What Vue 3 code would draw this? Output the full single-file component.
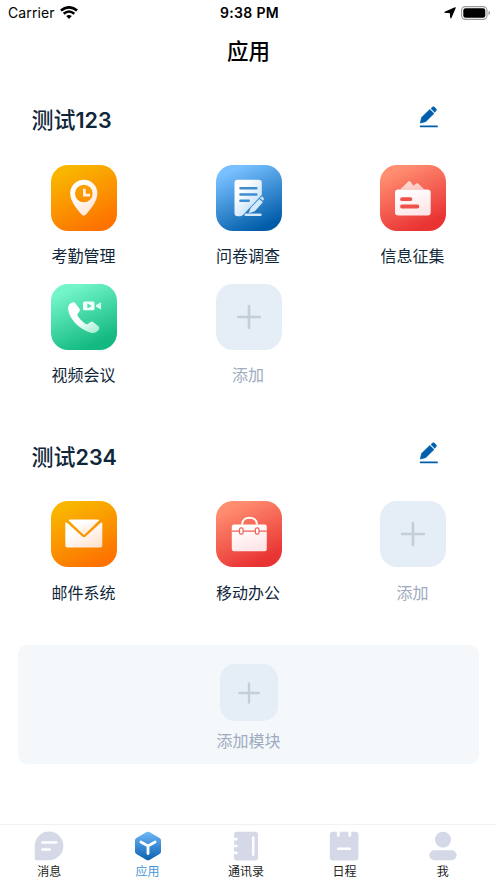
<script setup>
const sections = [
  {
    title: '测试',
    num: '123',
    apps: [
      { name: '考勤管理', icon: 'pin', tone: 'orange' },
      { name: '问卷调查', icon: 'survey', tone: 'blue' },
      { name: '信息征集', icon: 'collect', tone: 'red' },
      { name: '视频会议', icon: 'video', tone: 'green' },
      { name: '添加', icon: 'plus', tone: 'add' },
    ],
  },
  {
    title: '测试',
    num: '234',
    apps: [
      { name: '邮件系统', icon: 'mail', tone: 'orange' },
      { name: '移动办公', icon: 'bag', tone: 'red' },
      { name: '添加', icon: 'plus', tone: 'add' },
    ],
  },
]
const tabs = [
  { name: '消息', icon: 'chat' },
  { name: '应用', icon: 'cube', active: true },
  { name: '通讯录', icon: 'book' },
  { name: '日程', icon: 'calendar' },
  { name: '我', icon: 'user' },
]
</script>

<template>
  <div class="screen">
    <svg class="defs" width="0" height="0" aria-hidden="true">
      <defs>
        <linearGradient id="g-orange" x1="0.2" y1="0.1" x2="0.9" y2="1"><stop offset="0.2" stop-color="#fff" /><stop offset="1" stop-color="#ffe0cc" /></linearGradient>
        <linearGradient id="g-blue" x1="0.1" y1="0.1" x2="0.8" y2="0.9"><stop offset="0.2" stop-color="#fff" /><stop offset="1" stop-color="#bcdcf8" /></linearGradient>
        <linearGradient id="g-red" x1="0.3" y1="0" x2="0.7" y2="1"><stop offset="0" stop-color="#fff" /><stop offset="1" stop-color="#ffe4e6" /></linearGradient>
        <linearGradient id="g-green" x1="0.2" y1="0.1" x2="0.8" y2="1"><stop offset="0.45" stop-color="#fff" /><stop offset="1" stop-color="#a9efd5" /></linearGradient>
        <linearGradient id="g-cube" x1="0" y1="0" x2="0" y2="1"><stop offset="0" stop-color="#70b8fa" /><stop offset="1" stop-color="#0961ae" /></linearGradient>
      </defs>
    </svg>

    <header class="status">
      <div class="status-left">
        <span>Carrier</span>
        <svg width="18" height="13" viewBox="0 0 18 13" fill="none" stroke="#000" stroke-width="2.6">
          <path d="M.9 4.6Q9-2 17.1 4.6M3.7 7.8Q9 3.2 14.3 7.8" />
          <path d="M6.2 10.1Q9 7.7 11.8 10.1L9 13Z" fill="#000" stroke="none" />
        </svg>
      </div>
      <span class="clock">9:38 PM</span>
      <div class="status-right">
        <svg width="12" height="12" viewBox="0 0 12 12"><path d="M11.2.8 6.9 10.9 6.3 5.7.9 5.3Z" fill="#000" stroke="#000" stroke-width="1.1" stroke-linejoin="round" /></svg>
        <svg width="30" height="14" viewBox="0 0 30 14">
          <rect x=".6" y=".6" width="25.4" height="12.8" rx="3.8" fill="none" stroke="#999" stroke-width="1.1" />
          <rect x="2.3" y="2.3" width="22" height="9.4" rx="2.3" />
          <path d="M27.5 4.8q1.6.6 1.6 2.2t-1.6 2.2z" fill="#999" />
        </svg>
      </div>
    </header>

    <h1 class="page-title">应用</h1>

    <section v-for="s in sections" :key="s.num" class="section">
      <div class="section-head">
        <h2>{{ s.title }}<span>{{ s.num }}</span></h2>
        <svg class="edit" width="20" height="22" viewBox="0 0 20 22" fill="#005eac">
          <path d="M1.4 17 2.6 11.6 10.8 3.6 14.9 7.6 6.8 15.5Z" stroke="#005eac" stroke-width=".8" stroke-linejoin="round" />
          <path d="M11.9 2.5 13.4 1.1q1-.9 2 0l1.7 1.7q.9 1 0 2L15.9 6.4Z" stroke="#005eac" stroke-width=".4" />
          <rect x=".8" y="19.4" width="18" height="1.8" rx=".5" />
        </svg>
      </div>
      <div class="grid">
        <div v-for="(a, i) in s.apps" :key="i" class="app" :class="a.tone">
          <div class="tile">
            <svg width="66" height="66" viewBox="0 0 66 66" fill="none" stroke-linecap="round" stroke-linejoin="round">
              <template v-if="a.icon === 'pin'">
                <path fill="url(#g-orange)" fill-rule="evenodd" d="M32.8 14.8A13.6 13.6 0 0 0 19.2 28.5C19.2 36.5 26.4 44.5 30.6 49.6Q32.8 51.8 35 49.6C39.2 44.5 46.4 36.5 46.4 28.5A13.6 13.6 0 0 0 32.8 14.8ZM32.8 19.7A8.8 8.8 0 1 1 32.8 37.3A8.8 8.8 0 1 1 32.8 19.7Z" />
                <path d="M33.4 23.8V30.2H39.2" stroke="#fff0e0" stroke-width="2.8" stroke-linecap="butt" stroke-linejoin="miter" />
              </template>
              <template v-else-if="a.icon === 'survey'">
                <path fill="url(#g-blue)" d="M21.6 14.8H42.7Q45.8 14.8 45.8 17.8V29.8L27.2 49.8Q26 51.2 24.2 51.2H21.6Q18.5 51.2 18.5 48.2V17.8Q18.5 14.8 21.6 14.8Z" />
                <path d="M24.4 23.2H40.4M24.4 29.5H40.4M24.4 35.8H32.8" stroke="#3f8ccf" stroke-width="2.4" />
                <path d="M43.2 34 46.8 37.3 38.8 46.2 32.6 48.3 34.8 42.8Z" fill="#d5e9fb" />
                <path d="M44.4 32.7 45 32.2Q46 31.5 47 32.4Q48.2 33.6 47.4 34.8L46.9 35.3Z" fill="#d5e9fb" stroke="#d5e9fb" stroke-width=".6" />
                <path d="M29.7 49.7H44.4" stroke="#d5e9fb" stroke-width="2.5" />
              </template>
              <template v-else-if="a.icon === 'collect'">
                <path fill="url(#g-red)" fill-opacity=".75" d="M20 24.5 28.4 16.4Q29.3 15.4 30.2 16.4L33.6 20.8 36.3 18.5Q37.2 17.7 38.1 18.6L44.5 24.5Z" />
                <rect x="15" y="24.5" width="35.7" height="26" rx="3.3" fill="url(#g-red)" />
                <path d="M22 34.2H30.4M22 41.5H37.4" stroke="#ef514b" stroke-width="3.8" />
              </template>
              <template v-else-if="a.icon === 'video'">
                <path fill="url(#g-green)" d="M21.4 18.4C18.3 19.5 16.6 22.2 17.1 25.6C18.6 35.8 29.1 46 39.8 48.8C43.5 49.7 47 47.8 48.3 44.8Q48.7 43.3 47.2 42L42.4 38.2Q41.1 37.1 39.6 38.1L36.8 39.9Q35.5 40.6 34 39.6Q29.7 36.6 26.7 32Q25.9 30.6 26.8 29.4L28.4 27.4Q29.3 26.1 28.4 24.6L24.2 19Q23 17.7 21.4 18.4Z" />
                <path fill="#f3fffa" fill-rule="evenodd" d="M33.5 17.5H42Q43.5 17.5 43.5 19V24.7Q43.5 26.2 42 26.2H33.5Q32 26.2 32 24.7V19Q32 17.5 33.5 17.5ZM36.4 19.4V24.5L40.7 22Z" />
                <path fill="#d9fbed" d="M45 21.1 49.4 18.4Q50 18.2 50 18.9V25Q50 25.7 49.4 25.3L45 22.7Z" />
              </template>
              <template v-else-if="a.icon === 'mail'">
                <path fill="url(#g-orange)" d="M18.7 18.5H47.2Q48.7 18.7 47.8 19.8L34.2 33.1Q33 34.2 31.8 33.1L18 19.8Q17.3 18.7 18.7 18.5Z" />
                <path fill="url(#g-orange)" d="M14.3 22.3Q14.7 21 16 21.8L31.3 35.6Q33 37 34.6 35.6L49.7 21.8Q51 21 51.3 22.3V44.4Q51.3 46.5 49.2 46.5H16.4Q14.3 46.5 14.3 44.4Z" />
              </template>
              <template v-else-if="a.icon === 'bag'">
                <path d="M26.1 23.5C26.3 14.5 40.8 14.5 41 23.5" stroke="#fff" stroke-width="2.1" stroke-linecap="butt" />
                <rect x="15.8" y="23.5" width="35" height="26.8" rx="2.2" fill="url(#g-red)" />
                <path d="M15.8 30.1H50.8" stroke="#f26058" stroke-width="1.2" stroke-linecap="butt" />
                <rect x="23.5" y="26.9" width="3.6" height="6.3" rx="1.7" fill="#fff" stroke="#f26058" stroke-width="1.2" />
                <rect x="39.4" y="26.9" width="3.6" height="6.3" rx="1.7" fill="#fff" stroke="#f26058" stroke-width="1.2" />
              </template>
              <path v-else d="M33 22.1V43.9M22.1 33H43.9" stroke="#c3cedb" stroke-width="2.7" />
            </svg>
          </div>
          <span class="name">{{ a.name }}</span>
        </div>
      </div>
    </section>

    <div class="add-module">
      <div class="small-tile">
        <svg width="58" height="58" viewBox="0 0 58 58" fill="none" stroke-linecap="round">
          <path d="M29 19.4V38.6M19.4 29H38.6" stroke="#c3cedb" stroke-width="2.4" />
        </svg>
      </div>
      <span>添加模块</span>
    </div>

    <nav class="tabbar">
      <div v-for="t in tabs" :key="t.name" class="tab" :class="{ active: t.active }">
        <svg width="30" height="30" viewBox="0 0 30 30" fill="#d4d8e7" stroke-linecap="round">
          <template v-if="t.icon === 'chat'">
            <path d="M15 .6A14.3 14.3 0 1 1 15 29.3H2.3Q.8 29.3.8 27.8V14.9A14.3 14.3 0 0 1 15 .6Z" />
            <path d="M8.4 11.6H22.3M8.4 18.6H15.7" stroke="#fff" stroke-width="2.5" />
          </template>
          <template v-else-if="t.icon === 'cube'">
            <path fill="url(#g-cube)" d="M13.6 1Q15 .3 16.4 1L26.6 6.9Q28 7.7 28 9.3V20.6Q28 22.2 26.6 23L16.4 28.9Q15 29.7 13.6 28.9L3.4 23Q2 22.2 2 20.6V9.3Q2 7.7 3.4 6.9Z" />
            <path d="M7.9 11 15 14.9 22.1 11M15 14.9V22.6" fill="none" stroke="#fff" stroke-width="2.8" />
          </template>
          <template v-else-if="t.icon === 'book'">
            <rect x="3" y=".8" width="24" height="28.6" rx="3" />
            <path d="M2.5 8.2H5.4M2.5 15H5.4M2.5 21.8H5.4" stroke="#fff" stroke-width="2.7" />
            <path d="M22.2 6.6V23.7" stroke="#fff" stroke-width="2.5" />
          </template>
          <template v-else-if="t.icon === 'calendar'">
            <rect x=".8" y=".8" width="28.6" height="28.6" rx="3.2" />
            <path d="M9.3 0V4.4M20.8 0V4.4" stroke="#fff" stroke-width="2.8" />
            <path d="M9.2 17.7H20.8" stroke="#fff" stroke-width="2.6" />
          </template>
          <template v-else>
            <circle cx="15" cy="8.7" r="8" />
            <rect x="1.4" y="19.3" width="27.2" height="10" rx="5" />
          </template>
        </svg>
        <span>{{ t.name }}</span>
      </div>
    </nav>
  </div>
</template>

<style>
body {
  background: #fff;
}
</style>

<style scoped>
.screen {
  width: 497px;
  height: 883px;
  overflow: hidden;
  display: flex;
  flex-direction: column;
  font-family: Inter, "Noto Sans CJK SC", sans-serif;
  color: #10273a;
}
.defs {
  display: block;
  flex: none;
}
.status {
  height: 25px;
  flex: none;
  display: grid;
  grid-template-columns: 1fr auto 1fr;
  align-items: center;
  padding: 0 6px 0 8px;
  color: #000;
  font-size: 14px;
  line-height: 25px;
  box-sizing: border-box;
}
.status-left,
.status-right {
  display: flex;
  align-items: center;
  gap: 5px;
}
.status-left {
  letter-spacing: 0.1px;
}
.status-right {
  justify-content: flex-end;
}
.clock {
  font-weight: 600;
  letter-spacing: 0.3px;
}
.page-title {
  margin: 0;
  height: 50.5px;
  line-height: 52px;
  text-align: center;
  font-size: 21.5px;
  font-weight: 500;
  color: #000;
  flex: none;
}
.section {
  height: 217px;
  flex: none;
}
.section:nth-of-type(1) {
  height: 336.5px;
}
.section-head {
  height: 89px;
  display: flex;
  justify-content: space-between;
  align-items: center;
  padding: 0 58px 0 31.5px;
}
.section-head h2 {
  margin: 0;
  font-size: 22px;
  line-height: 30px;
  font-weight: 500;
}
.section-head h2 span {
  font-weight: 600;
  font-size: 21.5px;
}
.edit {
  margin-bottom: 7px;
}
.grid {
  display: grid;
  grid-template-columns: repeat(3, 164.5px);
  grid-auto-rows: 119px;
  justify-content: center;
}
.app {
  display: flex;
  flex-direction: column;
  align-items: center;
}
.tile {
  width: 66px;
  height: 66px;
  border-radius: 17px;
}
.tile svg {
  display: block;
}
.orange .tile {
  background: linear-gradient(155deg, #f9b600 12%, #fd7200 88%);
}
.blue .tile {
  background: linear-gradient(155deg, #77bfff 14%, #005ca8 88%);
}
.red .tile {
  background: linear-gradient(155deg, #ff8d70 14%, #e93434 84%);
}
.green .tile {
  background: linear-gradient(155deg, #73f5c9 14%, #13b980 84%);
}
.add .tile,
.small-tile {
  background: #e5eef6;
}
.name {
  margin-top: 13.5px;
  margin-right: 1px;
  font-size: 16px;
  line-height: 24px;
}
.add .name,
.add-module span {
  color: #9eabc0;
}
.add-module {
  flex: none;
  width: 460.5px;
  height: 119.5px;
  margin: 15.5px auto 0;
  padding-top: 19px;
  box-sizing: border-box;
  border-radius: 9px;
  background: #f4f8fb;
  display: flex;
  flex-direction: column;
  align-items: center;
}
.small-tile {
  width: 58px;
  height: 57.5px;
  border-radius: 15px;
}
.small-tile svg {
  display: block;
}
.add-module span {
  margin-top: 7.5px;
  font-size: 16px;
  line-height: 24px;
}
.tabbar {
  margin-top: auto;
  flex: none;
  height: 59px;
  box-sizing: border-box;
  border-top: 1px solid #f1f1f3;
  padding: 6px 5px 0 0;
  display: grid;
  grid-template-columns: repeat(5, 1fr);
}
.tab {
  display: flex;
  flex-direction: column;
  align-items: center;
  font-size: 12px;
  line-height: 18px;
  color: #1b1b1b;
}
.tab svg {
  display: block;
  margin-bottom: 2px;
}
.active {
  color: #4596d8;
}
</style>
